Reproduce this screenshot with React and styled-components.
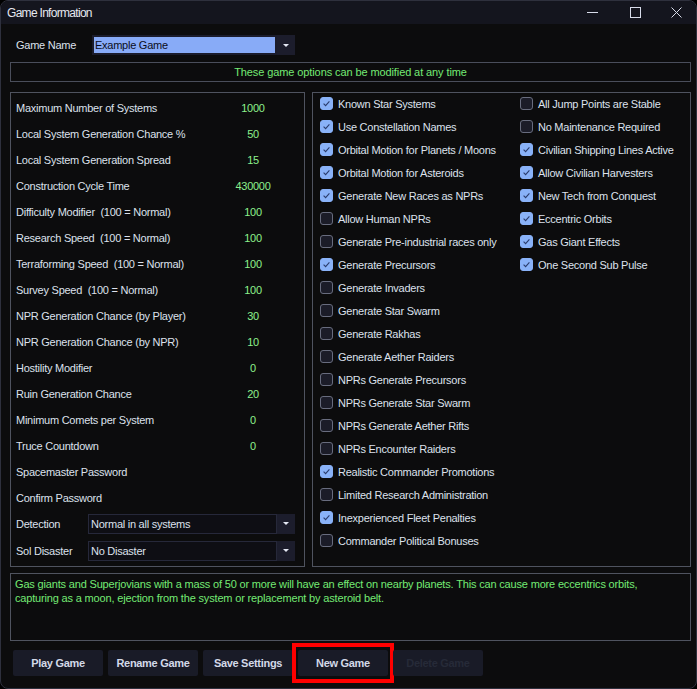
import React from "react";
import styled, { createGlobalStyle } from "styled-components";

const GlobalStyle = createGlobalStyle`
  html, body { margin: 0; padding: 0; background: #000; }
  body { font-family: "Liberation Sans", Arial, sans-serif; }
  * { box-sizing: border-box; }
`;

const Window = styled.div`
  width: 697px;
  height: 689px;
  background: #0c0c0d;
  border: 1px solid #2e303d;
  border-radius: 8px;
  overflow: hidden;
  display: flex;
  flex-direction: column;
  font-size: 11px;
  letter-spacing: -0.25px;
  color: #dde1ec;
`;

const TitleBar = styled.div`
  height: 23px;
  flex: none;
  background: #14151e;
  display: flex;
  align-items: center;
  padding-left: 6px;
`;

const Title = styled.div`
  flex: 1;
  font-size: 12px;
  letter-spacing: -0.7px;
  color: #e6e8f0;
`;

const CaptionButton = styled.div`
  width: ${(p) => p.$w}px;
  height: 23px;
  display: flex;
  align-items: center;
  justify-content: center;
`;

const Body = styled.div`
  flex: 1;
  display: flex;
  flex-direction: column;
  padding: 0 5px 0 9px;
`;

const NameRow = styled.div`
  margin-top: 11px;
  height: 20px;
  display: flex;
  align-items: center;
  padding-left: 6px;
`;

const NameLabel = styled.div`
  width: 76px;
`;

const Combo = styled.div`
  width: ${(p) => p.$w}px;
  height: 20px;
  display: flex;
  background: ${(p) => (p.$name ? "#1b1c2b" : "#0e0e14")};
`;

const ComboField = styled.div`
  flex: 1;
  display: flex;
  align-items: center;
  border: 1px solid ${(p) => (p.$name ? "#1b1c2b" : "#26283a")};
  padding: ${(p) => (p.$name ? "1px" : "0 0 0 2px")};
`;

const Highlight = styled.div`
  flex: 1;
  height: 100%;
  display: flex;
  align-items: center;
  background: #88abf7;
  color: #0b0d1a;
  padding-left: 1px;
`;

const ComboButton = styled.div`
  width: 18px;
  flex: none;
  background: #1c1d2c;
  display: flex;
  align-items: center;
  justify-content: center;
`;

const Arrow = styled.div`
  width: 0;
  height: 0;
  border-left: 3px solid transparent;
  border-right: 3px solid transparent;
  border-top: 3px solid #e4e8f4;
`;

const Banner = styled.div`
  margin-top: 7px;
  height: 20px;
  border: 1px solid #4a4e5b;
  display: flex;
  align-items: center;
  justify-content: center;
  color: #74ea74;
  letter-spacing: -0.1px;
`;

const Panels = styled.div`
  margin-top: 10px;
  height: 475px;
  display: flex;
  gap: 7px;
`;

const LeftPanel = styled.div`
  width: 295px;
  border: 1px solid #4f535f;
  padding: 2px 9px 0 5px;
  display: flex;
  flex-direction: column;
`;

const FieldRow = styled.div`
  height: ${(p) => p.$h || 26}px;
  display: flex;
  align-items: center;
`;

const FieldLabel = styled.div`
  flex: 1;
  white-space: pre;
`;

const FieldValue = styled.div`
  width: 60px;
  margin-right: 12px;
  text-align: center;
  color: #8cf08c;
`;

const ComboLabel = styled.div`
  width: 72px;
`;

const RightPanel = styled.div`
  flex: 1;
  border: 1px solid #4f535f;
  padding: 0 0 0 7px;
  display: flex;
`;

const CheckColumn = styled.div`
  width: ${(p) => (p.$w ? `${p.$w}px` : "auto")};
  margin-top: -1px;
  display: flex;
  flex-direction: column;
`;

const CheckRow = styled.div`
  height: 23px;
  display: flex;
  align-items: center;
  gap: 5px;
`;

const Box = styled.div`
  width: 13px;
  height: 13px;
  border-radius: 3px;
  flex: none;
  background: ${(p) => (p.$on ? "#89b2f8" : "#1b1c28")};
  border: 1px solid ${(p) => (p.$on ? "#89b2f8" : "#686c7e")};
  display: flex;
  align-items: center;
  justify-content: center;
`;

const Description = styled.div`
  margin-top: 6px;
  height: 68px;
  border: 1px solid #4f535f;
  padding: 3px 4px;
  color: #74ea74;
  line-height: 14px;
  letter-spacing: -0.17px;
`;

const Line = styled.div`
  white-space: nowrap;
`;

const ButtonBar = styled.div`
  margin-top: 9px;
  display: flex;
  gap: 5px;
  padding-left: 3px;
`;

const Button = styled.div`
  position: relative;
  width: 90px;
  height: 26px;
  background: #191b27;
  border-radius: 2px;
  display: flex;
  align-items: center;
  justify-content: center;
  font-weight: bold;
  font-size: 11px;
  letter-spacing: -0.3px;
  color: ${(p) => (p.$disabled ? "#262a38" : "#d3d9e8")};
  ${(p) =>
    p.$marked &&
    `
    &::after {
      content: "";
      position: absolute;
      left: -6px;
      right: -6px;
      top: -7px;
      bottom: -7px;
      border: 4px solid #ff0000;
    }
  `}
`;

const fields = [
  ["Maximum Number of Systems", "1000"],
  ["Local System Generation Chance %", "50"],
  ["Local System Generation Spread", "15"],
  ["Construction Cycle Time", "430000"],
  ["Difficulty Modifier  (100 = Normal)", "100"],
  ["Research Speed  (100 = Normal)", "100"],
  ["Terraforming Speed  (100 = Normal)", "100"],
  ["Survey Speed  (100 = Normal)", "100"],
  ["NPR Generation Chance (by Player)", "30"],
  ["NPR Generation Chance (by NPR)", "10"],
  ["Hostility Modifier", "0"],
  ["Ruin Generation Chance", "20"],
  ["Minimum Comets per System", "0"],
  ["Truce Countdown", "0"],
  ["Spacemaster Password", ""],
  ["Confirm Password", ""],
];

const checksLeft = [
  ["Known Star Systems", true],
  ["Use Constellation Names", true],
  ["Orbital Motion for Planets / Moons", true],
  ["Orbital Motion for Asteroids", true],
  ["Generate New Races as NPRs", true],
  ["Allow Human NPRs", false],
  ["Generate Pre-industrial races only", false],
  ["Generate Precursors", true],
  ["Generate Invaders", false],
  ["Generate Star Swarm", false],
  ["Generate Rakhas", false],
  ["Generate Aether Raiders", false],
  ["NPRs Generate Precursors", false],
  ["NPRs Generate Star Swarm", false],
  ["NPRs Generate Aether Rifts", false],
  ["NPRs Encounter Raiders", false],
  ["Realistic Commander Promotions", true],
  ["Limited Research Administration", false],
  ["Inexperienced Fleet Penalties", true],
  ["Commander Political Bonuses", false],
];

const checksRight = [
  ["All Jump Points are Stable", false],
  ["No Maintenance Required", false],
  ["Civilian Shipping Lines Active", true],
  ["Allow Civilian Harvesters", true],
  ["New Tech from Conquest", true],
  ["Eccentric Orbits", true],
  ["Gas Giant Effects", true],
  ["One Second Sub Pulse", true],
];

function Check({ label, on }) {
  return (
    <CheckRow>
      <Box $on={on}>
        {on && (
          <svg width="11" height="11" viewBox="0 0 11 11">
            <path d="M2.6 5.6 L4.6 7.6 L8.4 3.4" fill="none" stroke="#2b3d6e" strokeWidth="1.1" />
          </svg>
        )}
      </Box>
      <span>{label}</span>
    </CheckRow>
  );
}

function SelectBox({ w, children, name }) {
  return (
    <Combo $w={w} $name={name}>
      <ComboField $name={name}>
        {name ? <Highlight>{children}</Highlight> : children}
      </ComboField>
      <ComboButton>
        <Arrow />
      </ComboButton>
    </Combo>
  );
}

export default function App() {
  return (
    <>
      <GlobalStyle />
      <Window>
        <TitleBar>
          <Title>Game Information</Title>
          <CaptionButton $w={41}>
            <svg width="11" height="1" viewBox="0 0 11 1">
              <rect width="11" height="1" fill="#d8dcea" />
            </svg>
          </CaptionButton>
          <CaptionButton $w={44}>
            <svg width="11" height="11" viewBox="0 0 11 11">
              <rect x="0.5" y="0.5" width="10" height="10" fill="none" stroke="#d8dcea" />
            </svg>
          </CaptionButton>
          <CaptionButton $w={39}>
            <svg width="11" height="11" viewBox="0 0 11 11">
              <path d="M0.5 0.5 L10.5 10.5 M10.5 0.5 L0.5 10.5" stroke="#d8dcea" strokeWidth="1" />
            </svg>
          </CaptionButton>
        </TitleBar>
        <Body>
          <NameRow>
            <NameLabel>Game Name</NameLabel>
            <SelectBox w={203} name>
              Example Game
            </SelectBox>
          </NameRow>
          <Banner>These game options can be modified at any time</Banner>
          <Panels>
            <LeftPanel>
              {fields.map(([l, v]) => (
                <FieldRow key={l}>
                  <FieldLabel>{l}</FieldLabel>
                  <FieldValue>{v}</FieldValue>
                </FieldRow>
              ))}
              <FieldRow $h={25}>
                <ComboLabel>Detection</ComboLabel>
                <SelectBox w={207}>Normal in all systems</SelectBox>
              </FieldRow>
              <FieldRow $h={29}>
                <ComboLabel>Sol Disaster</ComboLabel>
                <SelectBox w={207}>No Disaster</SelectBox>
              </FieldRow>
            </LeftPanel>
            <RightPanel>
              <CheckColumn $w={200}>
                {checksLeft.map(([l, on]) => (
                  <Check key={l} label={l} on={on} />
                ))}
              </CheckColumn>
              <CheckColumn>
                {checksRight.map(([l, on]) => (
                  <Check key={l} label={l} on={on} />
                ))}
              </CheckColumn>
            </RightPanel>
          </Panels>
          <Description>
            <Line>
              Gas giants and Superjovians with a mass of 50 or more will have an effect on nearby planets. This can cause more eccentrics orbits,
            </Line>
            <Line>capturing as a moon, ejection from the system or replacement by asteroid belt.</Line>
          </Description>
          <ButtonBar>
            <Button>Play Game</Button>
            <Button>Rename Game</Button>
            <Button>Save Settings</Button>
            <Button $marked>New Game</Button>
            <Button $disabled>Delete Game</Button>
          </ButtonBar>
        </Body>
      </Window>
    </>
  );
}
